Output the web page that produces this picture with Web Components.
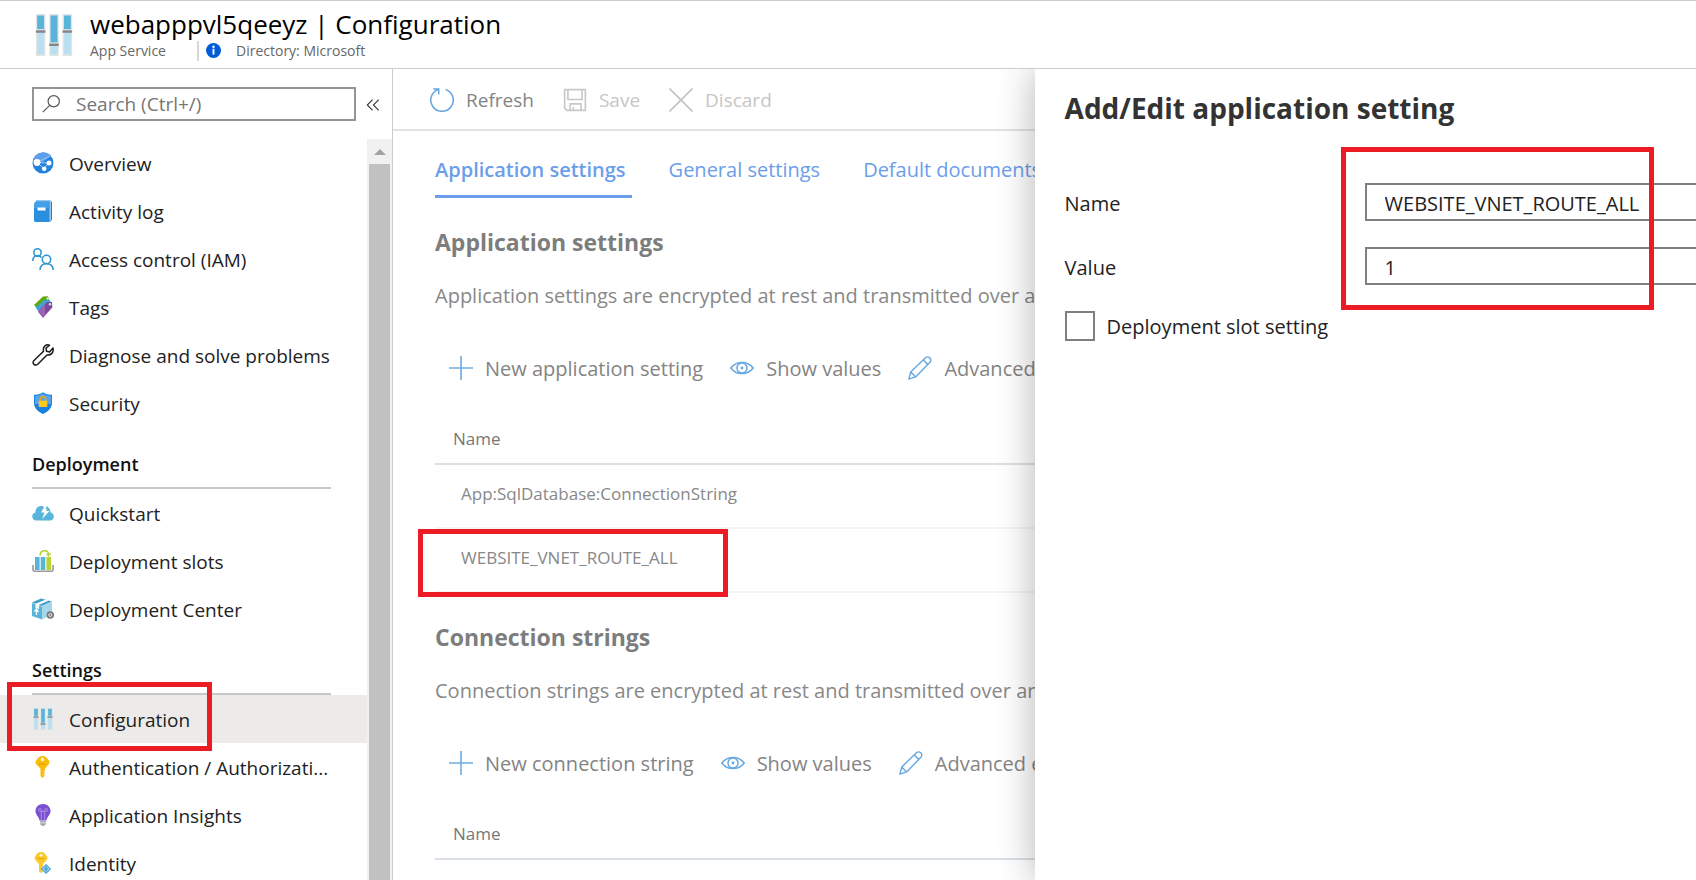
<!DOCTYPE html>
<html lang="en">
<head>
<meta charset="utf-8">
<title>webapppvl5qeeyz | Configuration</title>
<style>
body { margin: 0; font-family: "Open Sans", "Noto Sans", sans-serif; color: #222; background: #fff; }
</style>
</head>
<body>
<portal-page></portal-page>
<script>
const ICONS = {
  sliders: `<g><rect x="1.500" y="0" width="5" height="22" fill="#e4e4e4"/><rect x="2.200" y=".8" width="3.600" height="20.400" fill="#b9dff0"/><rect x="2.200" y=".8" width="3.600" height="8" fill="#59b4d9"/><rect x="8.500" y="0" width="5" height="22" fill="#e4e4e4"/><rect x="9.200" y=".8" width="3.600" height="20.400" fill="#b9dff0"/><rect x="9.200" y=".8" width="3.600" height="15" fill="#59b4d9"/><rect x="15.500" y="0" width="5" height="22" fill="#e4e4e4"/><rect x="16.200" y=".8" width="3.600" height="20.400" fill="#b9dff0"/><rect x="16.200" y=".8" width="3.600" height="8" fill="#59b4d9"/><path d="M1.500 8.200h5M8.500 15.200h5M15.500 8.200h5" stroke="#dcdcdc" stroke-width=".8"/><path d="M1.500 9.200h5M8.500 16.200h5M15.500 9.200h5" stroke="#858585" stroke-width="1.200"/></g>`,
  globe: `<circle cx="11" cy="11" r="10.500" fill="#2282dd"/><path d="M1 8a10.500 10.500 0 0 1 18-4L11 10 2 12z" fill="#5ea0ef"/><path d="M5 10.500L18 4M5 10.500l7 6 5-6M5 10.500l12 .5" stroke="#9cc8f5" stroke-width="1" fill="none"/><circle cx="5" cy="10.500" r="3.400" fill="#fff"/><circle cx="17" cy="11" r="2.500" fill="#fff"/><circle cx="12.200" cy="16.800" r="2.300" fill="#fff"/>`,
  book: `<path d="M4 0h14q2 0 2 2v17q0 2-2 2H4z" fill="#9cc8ee"/><path d="M19.500 2v17.500L18 21.500" fill="none" stroke="#2b7cc9"/><path d="M2 3.500L4 1.500h13.500V22h-14Q2 22 2 20.500z" fill="#2b8fe0"/><path d="M2 3.500L4 1.500h13.500V8H2z" fill="#41a0e8"/><rect x="5.500" y="7.500" width="8" height="3" fill="#fff"/>`,
  people: `<g fill="none" stroke="#2f97cf" stroke-width="1.600"><circle cx="5.500" cy="4.500" r="3.700"/><path d="M.8 13c0-7 7-6 8.500-3.500"/><circle cx="14.500" cy="11.500" r="4.200"/><path d="M8 22c0-8.500 13-8.500 13.200 0"/></g>`,
  tags: `<path d="M2 9L11 .5l5-.2 1 4L6 13z" fill="#5ea70c"/><path d="M3.500 11.500L13 3.500l5 .5 1 4L7 16z" fill="#3fa3d5"/><path d="M6 15.500L15 6h5l.3 5.500L11 21.800z" fill="#804998"/><path d="M6 15.500L13 8v11.800l-2 2z" fill="#9a62b5"/><circle cx="15.500" cy="2.600" r="1" fill="#fff"/><circle cx="18" cy="8.200" r="1.300" fill="#b9e0f0"/>`,
  wrench: `<path d="M17.500 1.200c-3-1.300-7 1-6 6L1.500 17q-1 2 .5 3.500 2 1.200 3.500 0L15 11c4 .5 7-2.500 6-7l-3.500 4-3-.8-.5-3z" fill="none" stroke="#1b1b1b" stroke-width="1.500" stroke-linejoin="round"/>`,
  shield: `<path d="M11 .3c2 1.800 5 2.500 9 2.400v8c0 6-5 9.300-9 11.300-4-2-9-5.300-9-11.300v-8c4 .1 7-.6 9-2.400z" fill="#1a82de"/><path d="M11 1.600c2 1.500 4.500 2.200 8 2.100V12H3V3.700c3.500.1 6-.6 8-2.100z" fill="#59a4ee"/><path d="M8.300 9V7.200a2.700 2.700 0 0 1 5.400 0V9" fill="none" stroke="#f0a800" stroke-width="1.600"/><rect x="6.700" y="8.800" width="8.600" height="6.200" rx=".8" fill="#ffc820"/>`,
  cloud: `<path d="M4.500 18.500C-1 18.500-1 11 3.500 10.500 3 5 9 2 12.500 5.500c5 0 6 2 6 5 4.500.5 4.500 8-.5 8z" fill="#59b4d9"/><path d="M13.500 2.500L9 10.500h3.500L10 17l7.500-8H14l4-6.500z" fill="#fff"/><path d="M14.800 4l-1.200 3h4z" fill="#59b4d9"/>`,
  slots: `<path d="M1 15v4.500q0 1.800 2 1.800h16q2 0 2-1.800V15" fill="none" stroke="#999" stroke-width="1.600"/><rect x="3" y="7" width="4.600" height="13" fill="#59b4d9"/><rect x="8.700" y="7" width="4.600" height="13" fill="#59b4d9"/><rect x="14.400" y="7" width="4.600" height="13" fill="#b8d432"/><path d="M8 5.500C8.500-1 16.500-.5 16.500 4" fill="none" stroke="#b8d432" stroke-width="1.600"/><path d="M13.800 3.500h5.600L16.500 7z" fill="#b8d432"/>`,
  box: `<path d="M0 5l10 3.500v13L0 18z" fill="#59b4d9"/><path d="M10 8.500L20 4v12.500L10 21.500z" fill="#a5d7ea"/><path d="M0 4.500L9 .5 20 3.500 10 8z" fill="#3e9fca"/><path d="M3.500 5.800L14 1.500l3 1-10 4.300v4.700l-2-1.500-1.500.5z" fill="#fff"/><path d="M4.500 17v-5M2.500 13.500l2-2.500 2 3" stroke="#fff" stroke-width="1.300" fill="none"/><circle cx="18.300" cy="17" r="3.700" fill="#7a7a7a"/><circle cx="18.300" cy="17" r="1.500" fill="none" stroke="#fff" stroke-width=".8"/>`,
  key: `<path d="M10.500 0c3 0 4 1.500 5.500 3.200 2 2 2 4 0 6L13 12.500v2l-1.300 1.300 1.300 1.500-1.300 1.300 1 1.200-2.200 2.200L8.500 20v-7.500L5 9.200c-2-2-2-4 0-6C6.500 1.500 7.500 0 10.500 0z" fill="#fbbd0c"/><circle cx="10.500" cy="3.400" r="1.600" fill="#fff"/><path d="M7 8h7" stroke="#e59b00" stroke-width="1"/>`,
  bulb: `<path d="M11 0c4.500 0 7.500 3.300 7.500 7 0 4-3.500 5.500-4 9.500h-7c-.5-4-4-5.500-4-9.500C3.500 3.300 6.500 0 11 0z" fill="#7a4fd0"/><path d="M9.300 16V7M12.700 16V7M9.300 7.300H7.800a1.400 1.400 0 1 1 1.500-1.400zM12.700 7.300h1.500a1.400 1.400 0 1 0-1.500-1.400zM9.300 7.300h3.400" stroke="#b79cee" stroke-width=".8" fill="none"/><path d="M8 17h6v3l-2 2h-2l-2-2z" fill="#a8a8a8"/><path d="M8 18.800h6" stroke="#ddd"/>`,
  identity: `<path d="M9 0c3 0 4 1.500 5 3.200 2 2 2 3.500 0 5.500l-3 3v2.500l-1 1 1 1.500-1 1.500 1 1-1.500 2L7 19.500V12L4 8.700c-2-2-2-3.500 0-5.500C5 1.500 6 0 9 0z" fill="#fcc82c"/><circle cx="9" cy="3.200" r="1.300" fill="#fff"/><path d="M5.500 6.500h7" stroke="#e5a300"/><path d="M14 12l5 5-5 5-5-5z" fill="#8fd0ec"/><path d="M14 12.500l4.500 4.500-4.500 4.500L9.500 17zM14 14v6M12 17h4" stroke="#3c9ccc" fill="none"/>`,
  search: `<g fill="none" stroke="#555" stroke-width="1.300"><circle cx="14" cy="8" r="6.200"/><path d="M9.600 12.500L2 20"/></g>`,
  info: `<circle cx="11" cy="11" r="11" fill="#015cda"/><rect x="9.600" y="8.500" width="2.800" height="8.500" fill="#fff"/><circle cx="11" cy="5.400" r="1.800" fill="#fff"/>`,
  chevrons: `<path d="M10.500 4.500L4 11l6.500 6.500M18 4.500L11.500 11l6.500 6.500" fill="none" stroke="#333" stroke-width="1.300"/>`,
  refresh: `<path d="M14.300 1.300a10.300 10.300 0 1 1-6.600 0M3 .9h5v5" fill="none" stroke="#67a8e0" stroke-width="1.400"/>`,
  save: `<g fill="none" stroke="#c8c8c8" stroke-width="1.500"><path d="M1.500 1.500h19v19h-17l-2-2z"/><path d="M4.500 1.500v9h13v-9M6.500 20.500v-6h10v6M9.500 20.500v-3"/></g>`,
  cross: `<path d="M.5.500l21 21M21.500.500l-21 21" stroke="#c4c4c4" stroke-width="1.600"/>`,
  plus: `<path d="M11 0v22M0 11h22" stroke="#6fade0" stroke-width="1.500"/>`,
  eye: `<g fill="none" stroke="#67a8e0" stroke-width="1.400"><path d="M.7 11C6 4.200 16 4.200 21.300 11 16 17.800 6 17.800.7 11z"/><circle cx="11" cy="11" r="4.600"/></g><circle cx="11" cy="11" r="1.300" fill="#67a8e0"/>`,
  pencil: `<path d="M.8 21.200l1.700-6.500L16 1.500c3-2 6 1.200 4.300 4L7 19.200zM2.500 14.700L7 19.200M14 3.500L18.300 8" fill="none" stroke="#67a8e0" stroke-width="1.300" stroke-linejoin="round"/>`
};

/* Attaches an open shadow root with the given styles and markup. */
function render(host, css, html) {
  host.attachShadow({ mode: 'open' }).innerHTML = `<style>*{box-sizing:border-box}${css}</style>${html}`;
}

customElements.define('app-icon', class extends HTMLElement {
  connectedCallback() {
    if (this.shadowRoot) return;
    render(this, `:host{display:block;flex:none;width:22px;height:22px}svg{display:block;width:100%;height:100%}`,
      `<svg viewBox="0 0 22 22" aria-hidden="true">${ICONS[this.getAttribute('name')]}</svg>`);
  }
});

/* Red outline laid over the nearest positioned ancestor. */
customElements.define('call-out', class extends HTMLElement {
  connectedCallback() {
    if (this.shadowRoot) return;
    render(this, `:host{position:absolute;z-index:3;box-sizing:border-box;border:5px solid #ed1c24;pointer-events:none}`, '');
  }
});

customElements.define('page-header', class extends HTMLElement {
  connectedCallback() {
    render(this, `
      :host{display:flex;align-items:center;gap:15px;height:69px;box-sizing:border-box;padding:0 33px;border-top:1px solid #ccc;border-bottom:1px solid #ccc;background:#fff;position:relative;z-index:2}
      .logo{width:42px;height:42px}
      h1{margin:0;font-size:26px;line-height:34px;font-weight:500;color:#000}
      .sub{display:flex;align-items:center;font-size:14px;line-height:20px;color:#666;padding-bottom:2px}
      .dir{display:flex;align-items:center;gap:15px;margin-left:31px;padding-left:7px;border-left:2px solid #d6d6d6}
      .dir app-icon{width:15px;height:15px}`,
      `<app-icon class="logo" name="sliders"></app-icon>
       <div><h1><slot></slot></h1>
       <div class="sub"><span>App Service</span><span class="dir"><app-icon name="info"></app-icon>Directory: Microsoft</span></div></div>`);
  }
});

customElements.define('nav-item', class extends HTMLElement {
  connectedCallback() {
    render(this, `
      :host{display:block;position:relative}
      :host([current]){background:#edebe9}
      a{display:flex;align-items:center;gap:15px;height:48px;padding:0 32px;font-size:19px;color:#222;text-decoration:none;white-space:nowrap}
      span{padding-top:2px}
      call-out{left:7px;top:-13px;width:205px;height:69px}`,
      `<a href="#"><app-icon name="${this.getAttribute('icon')}"></app-icon><span><slot></slot></span></a>
       ${this.hasAttribute('current') ? '<call-out></call-out>' : ''}`);
  }
});

customElements.define('nav-group', class extends HTMLElement {
  connectedCallback() {
    const label = this.getAttribute('label');
    render(this, `
      :host{display:block}
      h2{margin:0 36px 0 32px;height:62px;padding-top:23px;border-bottom:2px solid #c8c8c8;font-size:18px;line-height:28px;font-weight:600;color:#111}`,
      `${label ? `<h2>${label}</h2>` : ''}<slot></slot>`);
  }
});

customElements.define('side-nav', class extends HTMLElement {
  connectedCallback() {
    render(this, `
      :host{display:flex;flex-direction:column;min-height:0;border-right:1px solid #ccc}
      .find{display:flex;align-items:center;gap:8px;padding:18px 10px 18px 32px}
      .box{display:flex;align-items:center;gap:15px;flex:1;height:34px;padding:0 7px;border:2px solid #949494}
      .box app-icon{width:20px;height:20px}
      input{flex:1;min-width:0;border:0;outline:0;padding:0;font:19px/28px "Open Sans","Noto Sans",sans-serif;color:#333}
      input::placeholder{color:#767676;opacity:1}
      button{border:0;padding:2px 0 0;background:none}
      button app-icon{width:18px;height:18px}
      .body{display:grid;grid-template-columns:minmax(0,1fr) 25px;flex:1;min-height:0}
      nav{overflow:hidden}
      .track{background:#f1f1f1;padding:0 2px;display:flex;flex-direction:column}
      .up{height:25px;display:grid;place-items:center}
      .up::before{content:"";border:6px solid transparent;border-top:0;border-bottom-color:#a3a3a3}
      .thumb{flex:1;background:#c1c1c1}`,
      `<div class="find"><label class="box"><app-icon name="search"></app-icon><input type="text" placeholder="Search (Ctrl+/)" aria-label="Search"></label>
       <button type="button" aria-label="Collapse menu"><app-icon name="chevrons"></app-icon></button></div>
       <div class="body"><nav>
       <nav-group>
         <nav-item icon="globe">Overview</nav-item>
         <nav-item icon="book">Activity log</nav-item>
         <nav-item icon="people">Access control (IAM)</nav-item>
         <nav-item icon="tags">Tags</nav-item>
         <nav-item icon="wrench">Diagnose and solve problems</nav-item>
         <nav-item icon="shield">Security</nav-item>
       </nav-group>
       <nav-group label="Deployment">
         <nav-item icon="cloud">Quickstart</nav-item>
         <nav-item icon="slots">Deployment slots</nav-item>
         <nav-item icon="box">Deployment Center</nav-item>
       </nav-group>
       <nav-group label="Settings">
         <nav-item icon="sliders" current>Configuration</nav-item>
         <nav-item icon="key">Authentication / Authorizati...</nav-item>
         <nav-item icon="bulb">Application Insights</nav-item>
         <nav-item icon="identity">Identity</nav-item>
       </nav-group>
       </nav><div class="track"><div class="up"></div><div class="thumb"></div></div></div>`);
  }
});

customElements.define('command-button', class extends HTMLElement {
  connectedCallback() {
    const off = this.hasAttribute('disabled') ? 'disabled' : '';
    render(this, `
      :host{display:block;flex:none}
      button{display:flex;align-items:center;gap:12px;height:28px;padding:0 13px 0 14px;border:0;background:none;font:inherit;color:#848484;white-space:nowrap}
      button:disabled{color:#c6c6c6}
      app-icon{width:24px;height:24px}`,
      `<button type="button" ${off}><app-icon name="${this.getAttribute('icon')}"></app-icon><slot></slot></button>`);
  }
});

customElements.define('settings-section', class extends HTMLElement {
  connectedCallback() {
    const rows = [...this.children].map(c => `<tr><td>${c.textContent}${c.hasAttribute('marked') ? '<call-out></call-out>' : ''}</td></tr>`).join('');
    render(this, `
      :host{display:block;margin-top:28px;padding-left:42px}
      h2{margin:0 0 24px;font-size:23px;line-height:32px;font-weight:700;color:#7d7d7d}
      p{margin:0 0 44px;font-size:20px;line-height:28px;color:#888}
      .bar{display:flex;margin-bottom:32px;font-size:20px}
      table{width:100%;border-collapse:separate;border-spacing:0;font-size:17px;text-align:left}
      th{height:51px;padding:0 18px;border-bottom:2px solid #dae0e5;font-weight:400;color:#777}
      td{position:relative;height:64px;padding:0 26px 6px;border-bottom:2px solid #f4f4f4;color:#888}
      call-out{left:-17px;top:0;width:310px;height:68px}`,
      `<h2>${this.getAttribute('heading')}</h2><p>${this.getAttribute('text')}</p>
       <div class="bar"><command-button icon="plus">${this.getAttribute('add')}</command-button><command-button icon="eye">Show values</command-button><command-button icon="pencil">${this.getAttribute('edit')}</command-button></div>
       <table><thead><tr><th scope="col">Name</th></tr></thead><tbody>${rows}</tbody></table>`);
  }
});

customElements.define('config-view', class extends HTMLElement {
  connectedCallback() {
    render(this, `
      :host{display:block;min-width:0;overflow:hidden;white-space:nowrap}
      .top{display:flex;align-items:center;gap:2px;height:62px;padding:2px 0 0 23px;border-bottom:2px solid #e2e2e2;font-size:19px}
      .tabs{display:flex;gap:37px;padding:25px 0 0 42px;font-size:20px;line-height:28px}
      .tabs a{flex:none;padding:0 6px 11px 0;border-bottom:3px solid transparent;color:#6b9eea;text-decoration:none}
      .tabs a[aria-current]{font-weight:600;border-color:#6b9eea}`,
      `<div class="top"><command-button icon="refresh">Refresh</command-button><command-button icon="save" disabled>Save</command-button><command-button icon="cross" disabled>Discard</command-button></div>
       <div class="tabs"><a href="#" aria-current="page">Application settings</a><a href="#">General settings</a><a href="#">Default documents</a></div>
       <settings-section heading="Application settings" text="Application settings are encrypted at rest and transmitted over an" add="New application setting" edit="Advanced"><i>App:SqlDatabase:ConnectionString</i><i marked>WEBSITE_VNET_ROUTE_ALL</i></settings-section>
       <settings-section heading="Connection strings" text="Connection strings are encrypted at rest and transmitted over an" add="New connection string" edit="Advanced e"></settings-section>`);
  }
});

customElements.define('edit-panel', class extends HTMLElement {
  connectedCallback() {
    render(this, `
      :host{display:block;position:relative;padding:20px 0 0 30px;background:#fff;box-shadow:0 0 36px rgba(0,0,0,.3)}
      h2{margin:0 0 56px;font-size:28px;line-height:38px;font-weight:700;color:#333}
      .row{display:grid;grid-template-columns:300px minmax(0,1fr);align-items:center;margin-bottom:26px;font-size:20px}
      .row label{padding-top:2px}
      .row input{width:100%;height:38px;padding:2px 18px 0;border:2px solid #808080;border-right:0;border-radius:0;font:20px "Open Sans","Noto Sans",sans-serif;color:#222}
      .check{display:flex;align-items:center;gap:12px;font-size:20px}
      .check input{appearance:none;width:30px;height:30px;margin:0;border:2px solid #808080}
      call-out{left:306px;top:78px;width:313px;height:163px}`,
      `<h2>Add/Edit application setting</h2>
       <div class="row"><label for="n">Name</label><input id="n" type="text" value="WEBSITE_VNET_ROUTE_ALL"></div>
       <div class="row"><label for="v">Value</label><input id="v" type="text" value="1"></div>
       <label class="check"><input type="checkbox">Deployment slot setting</label>
       <call-out></call-out>`);
  }
});

customElements.define('portal-page', class extends HTMLElement {
  connectedCallback() {
    render(this, `
      :host{display:flex;flex-direction:column;height:100vh;overflow:hidden}
      main{display:grid;grid-template-columns:393px minmax(0,1fr) 39%;grid-template-rows:minmax(0,1fr);flex:1;min-height:0}`,
      `<page-header>webapppvl5qeeyz | Configuration</page-header>
       <main><side-nav></side-nav><config-view></config-view><edit-panel></edit-panel></main>`);
  }
});
</script>
</body>
</html>
